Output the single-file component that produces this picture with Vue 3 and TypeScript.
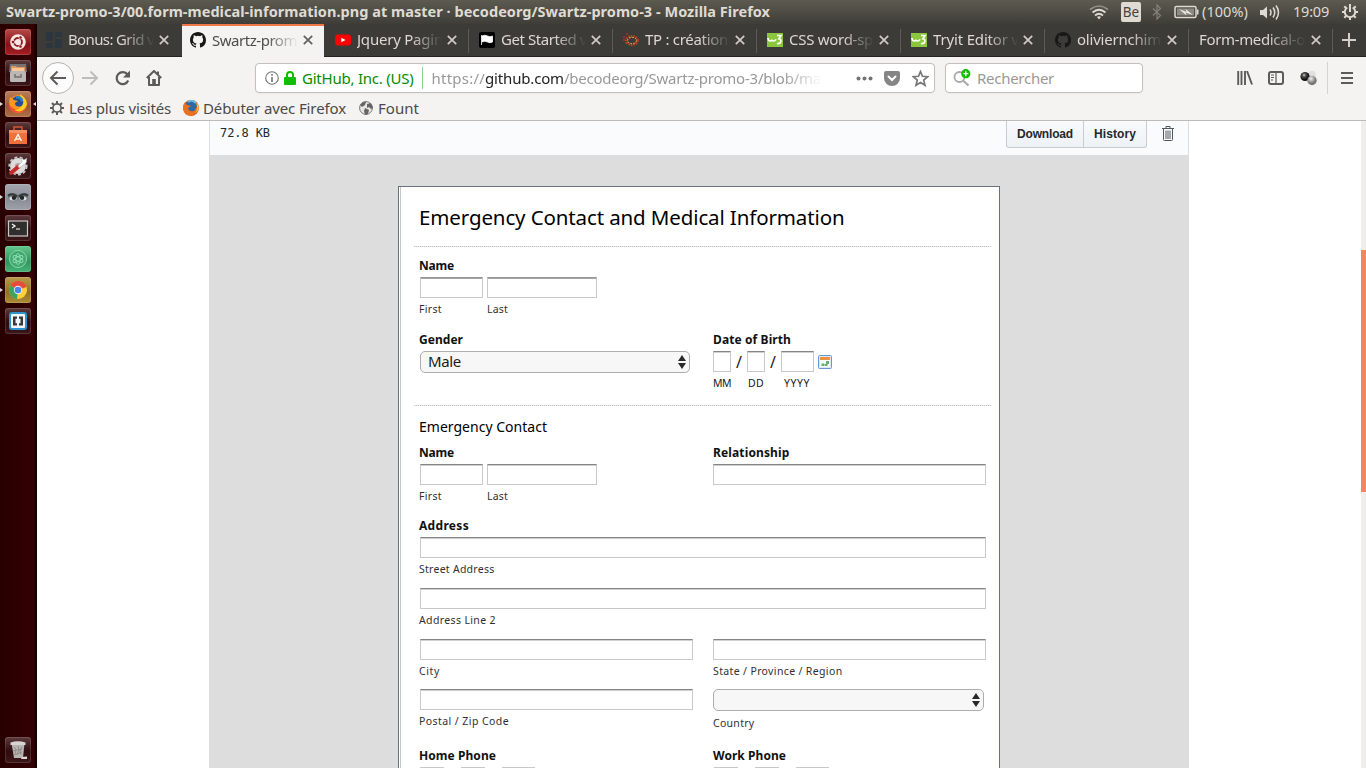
<script setup lang="ts">
interface Tab { id: string; title: string; width: number; active?: boolean }

const tabs: Tab[] = [
  { id: 'grid', title: 'Bonus: Grid v', width: 86 },
  { id: 'github', title: 'Swartz-prom', width: 85, active: true },
  { id: 'youtube', title: 'Jquery Pagin', width: 86 },
  { id: 'flag', title: 'Get Started v', width: 86 },
  { id: 'ring', title: 'TP : création', width: 83 },
  { id: 'w3', title: 'CSS word-sp', width: 84 },
  { id: 'w3', title: 'Tryit Editor v', width: 86 },
  { id: 'github', title: 'oliviernchim', width: 84 },
  { id: '', title: 'Form-medical-o', width: 106 },
]

const launchers = ['ubuntu', 'files', 'firefox', 'software', 'settings', 'eyes', 'terminal', 'atom', 'chrome', 'brackets', 'trash']

// Tracks a label out or in until it takes the given width in pixels.
const vFit = {
  mounted(el: HTMLElement, binding: { value: number }) {
    const natural = el.getBoundingClientRect().width
    const count = (el.textContent ?? '').length
    if (count) el.style.letterSpacing = `${(binding.value - natural) / count}px`
  },
}
</script>

<template>
  <div class="desktop">
    <header class="panel">
      <span v-fit="764" class="window-title">Swartz-promo-3/00.form-medical-information.png at master · becodeorg/Swartz-promo-3 - Mozilla Firefox</span>
      <div class="tray">
        <svg class="wifi" width="20" height="16" viewBox="0 0 20 16" fill="none" stroke="#dfdbd2" stroke-width="1.7">
          <path d="M1 5.500Q10-1.500 19 5.500" stroke="#969187" /><path d="M3.500 8.500Q10 3 16.500 8.500" /><path d="M6 11.500Q10 8 14 11.500" /><path d="M8 13Q10 11.500 12 13L10 15.500Z" fill="#dfdbd2" stroke="none" />
        </svg>
        <span class="keyboard">Be</span>
        <svg class="bt" width="10" height="16" viewBox="0 0 10 16" fill="none" stroke="#858178" stroke-width="1.2"><path d="M1 4.500L8.500 11.500L5 15V1L8.500 4.500L1 11.500" /></svg>
        <svg class="battery" width="25" height="14" viewBox="0 0 25 14">
          <rect x="1" y="1.500" width="21" height="11" rx="1.500" fill="none" stroke="#dfdbd2" stroke-width="1.500" /><rect x="3" y="3.500" width="17" height="7" fill="#8c8981" /><path d="M23 4.500h1.500v5H23" fill="#dfdbd2" /><path d="M5 4L12.500 7L11.500 4L19 10L11.500 7.500L12.500 10.500Z" fill="#efebe4" />
        </svg>
        <span v-fit="46" class="tray-text percent">(100%)</span>
        <svg class="volume" width="21" height="16" viewBox="0 0 21 16" fill="none" stroke="#dfdbd2" stroke-width="1.500">
          <path d="M1 6h3l4-3.500v12l-4-3.500H1z" fill="#dfdbd2" stroke="none" /><path d="M11 5.500q2 3 0 6M14 3.500q3.500 5 0 10M17 1.500q5 7 0 14" />
        </svg>
        <span v-fit="36" class="tray-text clock">19:09</span>
        <svg class="gear" width="18" height="18" viewBox="0 0 18 18" fill="none" stroke="#dfdbd2">
          <path d="M6.300 4.500a5.200 5.200 0 1 0 5.400 0" stroke-width="1.900" /><path stroke-width="2" d="M9 9V1M1 9h3M14 9h3M3.300 3.300L5 5M13 13l1.700 1.700M3.300 14.700L5 13M13 5l1.700-1.700M9 14v3" />
        </svg>
      </div>
    </header>

    <div class="workspace">
      <aside class="launcher">
        <div v-for="name in launchers" :key="name" class="app-icon" :class="name">
          <svg v-if="name === 'ubuntu'" viewBox="0 0 26 26"><circle cx="13" cy="13" r="7.800" fill="#f6e7e4" /><circle cx="13" cy="13" r="4" fill="none" stroke="#8e1b1e" stroke-width="1.800" /><g fill="#8e1b1e" stroke="#f6e7e4" stroke-width=".7"><circle cx="8" cy="13" r="1.700" /><circle cx="15.500" cy="8.500" r="1.700" /><circle cx="15.500" cy="17.500" r="1.700" /></g></svg>
          <svg v-else-if="name === 'files'" viewBox="0 0 26 26"><path d="M5 4h16l1 8H4z" fill="#777371" /><path d="M6 6h5l1 1h8v5H6z" fill="#eb9355" /><path d="M7 8h12v3H7z" fill="#f8c797" /><rect x="5" y="11" width="16" height="11" rx="1.500" fill="#bab8b4" /><path d="M10 14v3h6v-3" fill="none" stroke="#716d6b" stroke-width="1.400" /></svg>
          <svg v-else-if="name === 'firefox'" viewBox="0 0 26 26"><circle cx="13" cy="13" r="9" fill="#ff8a16" /><path d="M5 8q-4 9 4 13 9 3 13-6l-2-7-4 8z" fill="#ff4934" /><path d="M15 3q9 6 6 13-5 7-12 3 8-1 7-8z" fill="#ffd01e" /><circle cx="12.500" cy="11" r="5.800" fill="#254d91" /><path d="M5 6l4 3 4 1-3 2q0 5 7 3-5 6-11 1-3-4-1-10z" fill="#ff971c" /><path d="M11 6.500q6-1 6 4" fill="none" stroke="#2585d0" stroke-width="2.500" /></svg>
          <svg v-else-if="name === 'software'" viewBox="0 0 26 26"><path d="M9 9V5h8v4" fill="none" stroke="#d15730" stroke-width="1.500" /><path d="M4 8h18v14H4z" fill="#ee703c" /><path d="M4 8h18v3H4z" fill="#f49160" /><path d="M9.500 19L13 12.500l3.500 6.500M10.500 17h5" fill="none" stroke="#fff0e6" stroke-width="1.500" /></svg>
          <svg v-else-if="name === 'settings'" viewBox="0 0 26 26"><circle cx="13" cy="13" r="5.500" fill="#aaa8a6" stroke="#dedcda" stroke-width="5" /><circle cx="13" cy="13" r="8.700" fill="none" stroke="#c8c6c4" stroke-width="1.800" stroke-dasharray="3 2.300" /><path d="M6 20l7-6" stroke="#c52b2b" stroke-width="4" stroke-linecap="round" /><path d="M13 13l4-4V5l2 2 3-2-1 5-7 5z" fill="#fff" stroke="#999" stroke-width=".4" /></svg>
          <svg v-else-if="name === 'eyes'" viewBox="0 0 26 26"><path d="M2.500 11q5.500-4 10.500 0 5-4 10.500 0l-1 4q-4 4-8 1l-1.500-2-1.500 2q-4 3-8-1z" fill="#6f7577" /><ellipse cx="8" cy="14.500" rx="3.600" ry="2" fill="#dce1e2" /><ellipse cx="18" cy="14.500" rx="3.600" ry="2" fill="#dce1e2" /><circle cx="9" cy="13.800" r="2.200" fill="#222728" /><circle cx="17" cy="13.800" r="2.200" fill="#222728" /><path d="M3 11.500q5-3 9 1M23 11.500q-5-3-9 1" fill="none" stroke="#343739" stroke-width="2" /></svg>
          <svg v-else-if="name === 'terminal'" viewBox="0 0 26 26"><rect x="3.500" y="6" width="19" height="15" fill="#302f2e" stroke="#cbc9c7" stroke-width="1.200" /><path d="M7 9l3 2-3 2M11 14h4" fill="none" stroke="#fff" stroke-width="1.200" /></svg>
          <svg v-else-if="name === 'atom'" viewBox="0 0 26 26" fill="none" stroke="#8be0ae" stroke-width=".9"><circle cx="13" cy="13" r="8.500" fill="#43a771" /><ellipse cx="13" cy="13" rx="2.200" ry="5.500" /><ellipse cx="13" cy="13" rx="2.200" ry="5.500" transform="rotate(60 13 13)" /><ellipse cx="13" cy="13" rx="2.200" ry="5.500" transform="rotate(120 13 13)" /></svg>
          <svg v-else-if="name === 'chrome'" viewBox="0 0 26 26"><circle cx="13" cy="13" r="9" fill="#ffcf3b" /><path d="M13 13L5.200 8.500A9 9 0 0 1 21.500 10z" fill="#e84b3c" /><path d="M13 13L5.200 8.500A9 9 0 0 0 12 22z" fill="#37a660" /><circle cx="13" cy="13" r="4.200" fill="#f4f4f4" /><circle cx="13" cy="13" r="3.300" fill="#4d83ec" /></svg>
          <svg v-else-if="name === 'brackets'" viewBox="0 0 26 26"><rect x="5" y="5" width="16" height="16" rx="2" fill="#f2f5f6" stroke="#2c94ce" stroke-width="2" /><path d="M12 8.500H8v9h4v-2.300h-1.500v-4.400H12zM14 8.500h4v9h-4v-2.300h1.500v-4.400H14z" fill="#34383b" /></svg>
          <svg v-else viewBox="0 0 26 26"><path d="M6.500 6h13l-1.500 15H9z" fill="#b7b5b1" /><path d="M5.500 5.500q7.500-2.500 15 0v2.500h-15z" fill="#d8d5d0" /><path d="M9 10l2 3-1 4M13 9l1 4-2 5M17 10l-2 4 1 4M8 14l9-2M9 18l8-3" stroke="#8b8784" stroke-width=".9" fill="none" /><path d="M17 20l5-.5v2.500h-6z" fill="#dddad8" /></svg>
          <i v-if="['firefox', 'eyes', 'atom', 'chrome'].includes(name)" class="running" />
          <i v-if="name === 'firefox'" class="focused" />
        </div>
      </aside>

      <main class="browser">
        <nav class="tab-strip">
          <div v-for="(tab, i) in tabs" :key="i" class="tab" :class="{ active: tab.active, 'before-active': i === 0 }">
            <svg v-if="tab.id" class="favicon" viewBox="0 0 16 16">
              <g v-if="tab.id === 'grid'" fill="#2b3640"><path d="M0 0h7v9H0zM9 0h7v5H9zM0 11h7v5H0zM9 7h7v9H9z" /></g>
              <path v-else-if="tab.id === 'github'" fill="#191717" d="M8 0C3.580 0 0 3.580 0 8c0 3.540 2.290 6.530 5.470 7.590.4.070.55-.17.55-.38 0-.19-.01-.82-.01-1.490-2.010.37-2.530-.49-2.690-.94-.09-.23-.48-.94-.82-1.130-.28-.15-.68-.52-.01-.53.63-.01 1.080.58 1.230.82.72 1.210 1.870.87 2.330.66.07-.52.28-.87.51-1.070-1.780-.2-3.640-.89-3.640-3.950 0-.87.31-1.590.82-2.150-.08-.2-.36-1.020.08-2.120 0 0 .67-.21 2.200.82a7.600 7.600 0 0 1 4 0c1.530-1.040 2.200-.82 2.200-.82.44 1.100.16 1.920.08 2.120.51.56.82 1.270.82 2.150 0 3.070-1.870 3.750-3.650 3.950.29.25.54.73.54 1.480 0 1.070-.01 1.930-.01 2.200 0 .21.15.46.55.38A8 8 0 0 0 16 8c0-4.420-3.580-8-8-8z" />
              <g v-else-if="tab.id === 'youtube'"><rect x="0" y="2.500" width="16" height="11" rx="3" fill="#fe0000" /><path d="M6.300 5.700v4.600l4.200-2.300z" fill="#fff" /></g>
              <g v-else-if="tab.id === 'flag'"><rect width="16" height="16" rx="2" fill="#000" /><path d="M2.500 3v10M3 4q3-1.500 5.500 0t5 0v6q-2.500 1.500-5 0T3 10z" fill="#fff" stroke="#fff" stroke-width=".8" /></g>
              <g v-else-if="tab.id === 'ring'" fill="none"><ellipse cx="9" cy="8.500" rx="5.500" ry="4" stroke="#b9401f" stroke-width="3" stroke-dasharray="1.500 .8" /><ellipse cx="9" cy="8.500" rx="4.500" ry="3.200" stroke="#eab07a" stroke-width="1" stroke-dasharray="1.500 1.500" /><path d="M0 5h2M0 8h2M3 2h2M2 11h1" stroke="#d43423" /></g>
              <g v-else><path d="M0 1h16v14H0z" fill="#8cc63e" /><path d="M1 6q.3 3 2 3T4.800 7.500q.2 1.500 1.700 1.500T9 7.300M10 3.500H14L11.800 6.800q2.500.2 2 2.700T10 11.500" fill="none" stroke="#fff" stroke-width="1.600" /></g>
            </svg>
            <div class="tab-title"><span v-fit="tab.width">{{ tab.title }}</span></div>
            <svg class="close" viewBox="0 0 10 10"><path d="M.8.8l8.400 8.400M9.200.8L.8 9.200" /></svg>
          </div>
          <svg class="new-tab" viewBox="0 0 14 14"><path d="M7 0v14M0 7h14" stroke="#d2cec8" stroke-width="2" /></svg>
        </nav>

        <section class="toolbar">
          <div class="back"><svg width="18" height="16" viewBox="0 0 18 16"><path d="M17 8H2M8.500 1.500L2 8l6.500 6.500" /></svg></div>
          <svg class="forward" width="17" height="16" viewBox="0 0 17 16"><path d="M0 8h15M8.500 1.500L15 8l-6.500 6.500" /></svg>
          <svg class="reload" width="16" height="16" viewBox="0 0 16 16"><path d="M13.200 10.500A6 6 0 1 1 12.500 4.500" fill="none" stroke="#5c5b59" stroke-width="2.200" /><path d="M15 .5v7H8z" fill="#5c5b59" /></svg>
          <svg class="home" width="16" height="16" viewBox="0 0 16 16"><path d="M.8 8L8 1l7.200 7M3 7v8h10V7" fill="none" stroke="#5c5b59" stroke-width="2" stroke-linejoin="round" /><path d="M6.200 9h3.600v6H6.200zM11 1.500h2v3h-2z" fill="#5c5b59" /></svg>
          <div class="address">
            <svg width="14" height="14" viewBox="0 0 14 14"><circle cx="7" cy="7" r="6.300" fill="none" stroke="#777" stroke-width="1.100" /><path d="M7 6v5M7 3v1.700" stroke="#777" stroke-width="1.600" /></svg>
            <svg class="lock" width="12" height="14" viewBox="0 0 12 14"><path d="M3 7V4a3 3 0 0 1 6 0v3" fill="none" stroke="#12bc00" stroke-width="2" /><rect y="6" width="12" height="8" rx="1" fill="#12bc00" /></svg>
            <span v-fit="111.5" class="identity">GitHub, Inc. (US)</span>
            <i class="identity-line" />
            <div class="url"><span v-fit="53.5">https://</span><span v-fit="79" class="host">github.com</span><span v-fit="257">/becodeorg/Swartz-promo-3/blob/ma</span></div>
            <svg class="dots" width="17" height="5" viewBox="0 0 17 5" fill="#737373"><circle cx="2.500" cy="2.500" r="2" /><circle cx="8.500" cy="2.500" r="2" /><circle cx="14.500" cy="2.500" r="2" /></svg>
            <svg class="pocket" width="16" height="15" viewBox="0 0 16 15"><path d="M2 0h12q2 0 2 2v5a8 8 0 0 1-16 0V2q0-2 2-2z" fill="#858585" /><path d="M4.500 5.500L8 9l3.500-3.500" fill="none" stroke="#fff" stroke-width="2" stroke-linecap="round" /></svg>
            <svg class="star" width="17" height="17" viewBox="0 0 17 17"><path d="M8.500 1.500l2 4.800 5.200.4-4 3.400 1.300 5.200-4.500-2.800L4 15.300l1.300-5.200-4-3.400 5.200-.4z" fill="none" stroke="#777" stroke-width="1.700" /></svg>
          </div>
          <div class="search">
            <svg width="18" height="18" viewBox="0 0 18 18"><circle cx="6.500" cy="8" r="5" fill="none" stroke="#aaa" stroke-width="1.800" /><path d="M10 11.500l5.500 5" stroke="#aaa" stroke-width="2.200" /><circle cx="12.800" cy="4.700" r="4.600" fill="#12bc00" /><path d="M12.800 2.200v5M10.300 4.700h5" stroke="#fff" stroke-width="1.300" /></svg>
            <span v-fit="77">Rechercher</span>
          </div>
          <svg class="library" width="16" height="14" viewBox="0 0 16 14"><path d="M1.200 0v14M4.500 0v14M8 0v14M10 0l5 13.500" fill="none" stroke="#5c5b59" stroke-width="1.900" /></svg>
          <svg class="sidebar" width="16" height="14" viewBox="0 0 16 14"><rect x="1" y="1" width="14" height="12" rx="2" fill="none" stroke="#5c5b59" stroke-width="2" /><path d="M8 1v12M3 4h3M3 6.500h3M3 9h2" stroke="#5c5b59" stroke-width="1.200" /></svg>
          <svg class="orbs" width="18" height="16" viewBox="0 0 18 16">
            <defs><radialGradient id="dark-orb" cx=".4" cy=".35"><stop stop-color="#ddd" /><stop offset=".35" stop-color="#555" /><stop offset="1" stop-color="#111" /></radialGradient><radialGradient id="grey-orb" cx=".4" cy=".3"><stop stop-color="#eee" /><stop offset="1" stop-color="#777" /></radialGradient></defs>
            <circle cx="12" cy="4.500" r="3.800" fill="#e1e0df" /><circle cx="5" cy="6.500" r="4.600" fill="url(#dark-orb)" /><circle cx="12" cy="10.500" r="4.700" fill="url(#grey-orb)" />
          </svg>
          <i class="menu-line" />
          <svg class="menu" width="12" height="12" viewBox="0 0 12 12"><path d="M0 1h12M0 6h12M0 11h12" stroke="#5c5b59" stroke-width="1.900" /></svg>
        </section>

        <section class="bookmarks">
          <svg width="14" height="14" viewBox="0 0 14 14" fill="none" stroke="#5c5b59"><circle cx="7" cy="7" r="4.100" stroke-width="1.700" /><path stroke-width="2" d="M7 0v3M7 11v3M0 7h3M11 7h3M2 2l2 2M10 10l2 2M2 12l2-2M10 4l2-2" /></svg>
          <span v-fit="102" class="most">Les plus visités</span>
          <svg class="fx" width="16" height="16" viewBox="0 0 16 16"><circle cx="8" cy="8" r="8" fill="#db621d" /><circle cx="8" cy="6.500" r="6" fill="#2f68a5" /><path d="M5 2q4-3 8 1" stroke="#71b6dc" stroke-width="2" fill="none" /><path d="M1 3q2 0 3 2l4 1-3 2q1 4 6 3l4-6q1 7-5 10-9 2-10-7z" fill="#e9701f" /><path d="M13 3q3 6-1 10 5-3 3-8z" fill="#ffc846" /></svg>
          <span v-fit="143">Débuter avec Firefox</span>
          <svg class="globe" width="14" height="14" viewBox="0 0 14 14"><circle cx="7" cy="7" r="6.400" fill="#e7e6e5" stroke="#777" /><path d="M1 4q3-4 6-3L6 4 3 6zM8 3l4-1 2 5-2 1-2-2-2 1zM6 7l4 2-1 4-3 1-1-4z" fill="#656565" /></svg>
          <span v-fit="41">Fount</span>
        </section>

        <section class="viewport">
          <article class="file">
            <div class="file-bar">
              <span v-fit="50" class="size">72.8 KB</span>
              <div class="buttons"><span><b v-fit="56">Download</b></span><span><b v-fit="42">History</b></span></div>
              <svg class="bin" width="12" height="15" viewBox="0 0 12 15" fill="none" stroke="#50575e"><path d="M0 2.500h12M4 2V.5h4V2M1.500 3v10.500q0 1 1 1h7q1 0 1-1V3M4 4.500v8.500M6 4.500v8.500M8 4.500v8.500" /></svg>
            </div>
            <div class="canvas">
              <div class="form-sheet">
                <h1><span v-fit="425.500">Emergency Contact and Medical Information</span></h1>
                <div class="rule" />
                <div class="group first-group">
                  <label><span v-fit="35">Name</span></label>
                  <div class="pair"><i class="field given" /><i class="field family" /></div>
                  <div class="pair hints"><span class="given-hint"><span v-fit="23">First</span></span><span><span v-fit="21">Last</span></span></div>
                </div>
                <div class="columns details">
                  <div>
                    <label><span v-fit="44">Gender</span></label>
                    <div class="select"><span v-fit="33">Male</span><svg viewBox="0 0 8 14"><path d="M4 0l4 6H0zM4 14l4-6H0z" /></svg></div>
                  </div>
                  <div>
                    <label><span v-fit="78">Date of Birth</span></label>
                    <div class="date">
                      <i class="field" /><b>/</b><i class="field" /><b>/</b><i class="field year" />
                      <svg width="14" height="14" viewBox="0 0 14 14"><rect x=".5" y=".5" width="13" height="13" rx="1" fill="#dceaf8" stroke="#6b96d2" /><path d="M2 2h10v3H2z" fill="#f19148" /><path d="M2 5h10v7H2z" fill="#f9fbfd" /><path d="M8 6h3v3H8zM3.500 8.500h3v2.500h-3zM7 9h2.500v2H7z" fill="#65ad68" /></svg>
                    </div>
                    <div class="date-hints"><span v-fit="18">MM</span><span v-fit="16">DD</span><span v-fit="26">YYYY</span></div>
                  </div>
                </div>
                <div class="rule second" />
                <h2><span v-fit="128">Emergency Contact</span></h2>
                <div class="columns contact">
                  <div>
                    <label><span v-fit="35">Name</span></label>
                    <div class="pair"><i class="field given" /><i class="field family" /></div>
                    <div class="pair hints"><span class="given-hint"><span v-fit="23">First</span></span><span><span v-fit="21">Last</span></span></div>
                  </div>
                  <div><label><span v-fit="76.500">Relationship</span></label><i class="field" /></div>
                </div>
                <label><span v-fit="50">Address</span></label>
                <div class="line"><i class="field" /><span class="hint"><span v-fit="75.500">Street Address</span></span></div>
                <div class="line"><i class="field" /><span class="hint"><span v-fit="77">Address Line 2</span></span></div>
                <div class="columns line city-line">
                  <div class="half"><i class="field" /><span class="hint"><span v-fit="21">City</span></span></div>
                  <div><i class="field" /><span class="hint"><span v-fit="129.500">State / Province / Region</span></span></div>
                </div>
                <div class="columns line last-line">
                  <div class="half"><i class="field" /><span class="hint"><span v-fit="90">Postal / Zip Code</span></span></div>
                  <div><div class="select country"><span /><svg viewBox="0 0 8 14"><path d="M4 0l4 6H0zM4 14l4-6H0z" /></svg></div><span class="hint"><span v-fit="41.500">Country</span></span></div>
                </div>
                <div class="columns">
                  <div v-for="phone in ['Home', 'Work']" :key="phone">
                    <label><span v-fit="phone === 'Home' ? 77 : 73">{{ phone }} Phone</span></label>
                    <div class="phone"><i class="field" /><i class="field" /><i class="field" /></div>
                  </div>
                </div>
              </div>
            </div>
          </article>
          <div class="scrollbar"><i /></div>
        </section>
      </main>
    </div>
  </div>
</template>

<style>
body { margin: 0; overflow: hidden; }
</style>

<style scoped>
* { box-sizing: border-box; }
svg { display: block; flex: none; }
.desktop { width: 1366px; height: 768px; overflow: hidden; display: flex; flex-direction: column; font: 15px "Noto Sans", "Open Sans", sans-serif; white-space: nowrap; }
.desktop span { display: inline-block; flex: none; }
.panel { height: 24px; flex: none; display: flex; align-items: center; justify-content: space-between; padding-left: 6px; background: linear-gradient(#5d5b50, #3e3d38); color: #dfdbd2; }
.window-title { font-weight: 700; font-size: 14.500px; line-height: 24px; margin-top: -2px; }
.tray { display: flex; align-items: center; width: 277px; height: 24px; }
.keyboard { margin-left: 12px; width: 20px; height: 20px; line-height: 20px; border-radius: 2px; text-align: center; background: #dfdbd2; color: #44423d; font-size: 13.500px; }
.bt { margin-left: 11px; }
.battery { margin-left: 12px; }
.tray-text { font-size: 14.500px; margin-top: -2px; }
.percent { margin-left: 3px; }
.volume { margin-left: 11px; }
.clock { margin-left: 13px; }
.gear { margin-left: 12px; }
.workspace { flex: 1; min-height: 0; display: flex; }
.launcher { width: 37px; flex: none; display: flex; flex-direction: column; gap: 5px; padding: 5px 0 5px 5px; background: linear-gradient(90deg, #280000, #330003 90%, #170000 98%); }
.app-icon { position: relative; width: 26px; height: 26px; border-radius: 3px; background: linear-gradient(#5d3b3d, #2e0b0e 55%, #3c171b); box-shadow: inset 0 0 0 1px rgba(255,255,255,.13); }
.app-icon svg { width: 26px; height: 26px; }
.ubuntu { background: linear-gradient(#b64b49, #861216 60%, #a52025); }
.firefox { background: linear-gradient(#bb7d5a, #9a5635 60%, #af7047); }
.eyes { background: linear-gradient(#a3a5ae, #8a8d97 60%, #9fa1aa); }
.atom { background: linear-gradient(#62c78b, #2f955e 60%, #45b476); }
.chrome { background: linear-gradient(#b99b4c, #927022 60%, #ac8c38); }
.trash { margin-top: auto; }
.running { position: absolute; left: -5px; top: 11px; border: solid transparent; border-width: 2px 0 2px 3px; border-left-color: #ddd; }
.focused { position: absolute; right: -5px; top: 11px; border: solid transparent; border-width: 2px 3px 2px 0; border-right-color: #ddd; }
.browser { width: 1329px; display: flex; flex-direction: column; }
.tab-strip { height: 33px; flex: none; display: flex; align-items: center; background: #3c3b37; border-bottom: 1px solid #24231f; padding-right: 9px; }
.tab { width: 144px; flex: none; height: 33px; display: flex; align-items: center; padding: 0 0 1px 11px; position: relative; color: #dcd8d2; }
.before-active { width: 145px; padding-left: 9px; }
.tab:not(.active):not(.before-active)::after { content: ""; position: absolute; right: -1px; top: 5px; width: 1px; height: 24px; background: #5d5b57; }
.active { width: 142px; padding: 0 0 3px 8px; background: #f4f3f2; color: #4c4c4c; border-top: 2px solid #f07746; align-self: flex-start; }
.favicon { width: 16px; height: 16px; margin-right: 6px; }
.tab-title { flex: 1; overflow: hidden; line-height: 24px; margin-top: -1px; -webkit-mask-image: linear-gradient(90deg, #000 62%, transparent 98%); mask-image: linear-gradient(90deg, #000 62%, transparent 98%); }
.close { width: 10px; height: 10px; margin: 0 11px 0 3px; }
.before-active .close { margin-right: 13px; }
.close path { stroke: #d0ccc6; stroke-width: 1.700; }
.active .close path { stroke: #5f5f5e; }
.new-tab { width: 14px; height: 14px; margin-left: 10px; }
.toolbar { height: 43px; flex: none; display: flex; align-items: center; padding: 0 0 1px 5px; background: #f4f3f2; }
.back { width: 32px; height: 32px; border: 1px solid #b5b3b1; border-radius: 50%; background: #fcfcfc; display: flex; align-items: center; justify-content: center; }
.back path { fill: none; stroke: #5c5b59; stroke-width: 2; }
.forward { margin-left: 8px; }
.forward path { fill: none; stroke: #bebdbb; stroke-width: 2; }
.reload { margin-left: 16px; }
.home { margin-left: 15px; }
.address, .search { height: 30px; border: 1px solid #c2bfbc; border-radius: 4px; background: #fff; display: flex; align-items: center; box-shadow: 0 1px 2px rgba(0,0,0,.04); }
.address { width: 680px; margin-left: 93px; padding-left: 9px; flex: none; }
.lock { margin-left: 5px; }
.identity { margin-left: 6px; color: #058b00; }
.identity-line { width: 1px; height: 22px; margin: 0 9px 0 8px; background: #8fd18c; flex: none; }
.url { width: 390px; overflow: hidden; color: #999; -webkit-mask-image: linear-gradient(90deg, #000 90%, transparent); mask-image: linear-gradient(90deg, #000 90%, transparent); }
.host { color: #222; }
.dots { margin-left: 34px; }
.pocket { margin-left: 11px; }
.star { margin-left: 12px; }
.search { width: 198px; margin-left: 10px; padding-left: 7px; color: #989898; flex: none; }
.search span { margin-left: 6px; }
.library { margin-left: 94px; }
.sidebar { margin-left: 15px; }
.orbs { margin-left: 16px; }
.menu-line { width: 1px; height: 32px; margin-left: 9px; background: #d6d4d1; flex: none; }
.menu { margin-left: 13px; }
.bookmarks { height: 21px; flex: none; display: flex; align-items: center; padding: 0 0 4px 13px; background: #f4f3f2; border-bottom: 1px solid #bebab7; color: #4a4a49; line-height: 16px; }
.bookmarks span { margin-top: -1px; }
.most { margin-left: 5px; }
.fx { margin: 0 4px 0 12px; }
.globe { margin: 0 5px 0 13px; }
.viewport { flex: 1; min-height: 0; display: flex; justify-content: space-between; background: #fff; }
.file { width: 980px; margin-left: 172px; border: solid #ddd; border-width: 0 1px; }
.file-bar { height: 35px; display: flex; align-items: flex-start; background: #fafbfc; border-bottom: 1px solid #ddd; padding-left: 10px; }
.size { font: 12px/24px "DejaVu Sans Mono", monospace; color: #24292e; }
.buttons { display: flex; height: 27px; margin-left: 736px; border: 1px solid #c8cccf; border-top: 0; border-radius: 0 0 3px 3px; background: linear-gradient(#f8fafc, #eef2f6); font: 700 12px/26px "Liberation Sans", Arial, sans-serif; color: #24292e; }
.buttons > span { padding: 0 10px; height: 26px; }
.buttons > span + span { border-left: 1px solid #c8cccf; }
.buttons b { display: inline-block; }
.bin { margin: 5px 0 0 15px; }
.canvas { height: 612px; padding: 30px 0 0 188px; background: #ddd; overflow: hidden; }
.form-sheet { width: 602px; height: 650px; border: 1px solid #68727e; background: #fff; box-shadow: inset 1px 0 #fff, inset 2px 0 #c4c9cc; padding-left: 20px; font-family: "Noto Sans", sans-serif; color: #1b1b1b; }
h1 { margin: 0; font-weight: 400; font-size: 20.500px; line-height: 60px; height: 59px; color: #000; }
.rule { width: 577px; height: 1px; margin-left: -5px; background: repeating-linear-gradient(90deg, #c0c0c0 0 1px, #e8e8e8 1px 2px); }
.first-group { margin-top: 8px; height: 73px; }
label { display: block; height: 22px; line-height: 22px; font-size: 12px; font-weight: 700; color: #111; }
.field { display: block; height: 21px; border: 1px solid #c9c9c9; border-top-color: #858585; box-shadow: inset 0 1px #d0d0d0; background: #fff; width: 273px; }
.first-group .field { border-top-color: #979797; box-shadow: inset 0 1px #a5a5a5; }
.pair { display: flex; gap: 4px; }
.given { width: 63px; margin-left: 1px; }
.given-hint { width: 64px; }
.family { width: 110px; }
.hints, .hint { font-size: 10.500px; line-height: 23px; height: 23px; color: #303030; }
.hint { display: block !important; }
.columns { display: grid; grid-template-columns: 294px 273px; }
.details { height: 77px; }
.details label { height: 23px; line-height: 23px; }
.select { width: 270px; margin-left: 1px; height: 22px; border: 1px solid #adadad; border-radius: 5px; background: #f7f7f7; display: flex; align-items: center; justify-content: space-between; padding: 0 3px 0 7px; font-size: 15px; line-height: 18px; }
.select span { margin-top: -2px; }
.select svg { width: 8px; height: 14px; fill: #292929; }
.date { display: flex; align-items: center; height: 21px; font-size: 16px; }
.date b { font-weight: 400; width: 16px; text-align: center; flex: none; }
.date .field { width: 18px; flex: none; }
.date .year { width: 33px; }
.date svg { margin-left: 4px; }
.date-hints { display: flex; font-size: 10.500px; line-height: 22px; }
.date-hints span + span { margin-left: 17px; }
.date-hints span:last-child { margin-left: 20px; }
h2 { margin: 12px 0 6px; height: 18px; font-weight: 400; font-size: 14px; line-height: 18px; color: #000; }
.contact { height: 73px; }
.form-sheet > label { height: 22px; }
.line { height: 51px; }
.line > .field { width: 566px; margin-left: 1px; }
.half .field { width: 273px; margin-left: 1px; }
.city-line { height: 50px; }
.last-line { height: 56px; }
.country { margin-left: 0; width: 271px; }
.country + .hint { line-height: 24px; }
.phone { display: flex; gap: 17px; padding-left: 1px; }
.phone .field { width: 24px; border-top-color: #c9c9c9; }
.phone .field:last-child { width: 33px; }
.scrollbar { width: 5px; background: #efeeed; padding-top: 129px; }
.scrollbar i { display: block; height: 242px; background: #f08763; }
</style>
